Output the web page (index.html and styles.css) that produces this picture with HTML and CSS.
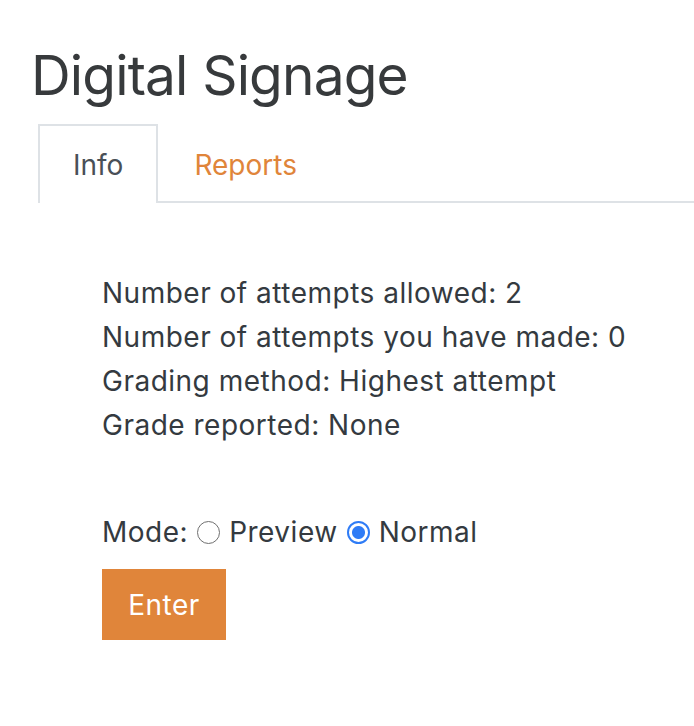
FILE: index.html
```html
<!DOCTYPE html>
<html lang="en">
<head>
<meta charset="utf-8">
<title>Digital Signage</title>
<link rel="stylesheet" href="styles.css">
</head>
<body>
<div class="page">
  <h1 class="title">Digital Signage</h1>
  <ul class="tabs">
    <li class="tab active">Info</li>
    <li class="tab"><a href="#">Reports</a></li>
  </ul>
  <div class="content">
    <div class="info">
      <p>Number of attempts allowed: 2</p>
      <p>Number of attempts you have made: 0</p>
      <p>Grading method: Highest attempt</p>
      <p>Grade reported: None</p>
    </div>
    <div class="mode">
      <span>Mode:</span>
      <label class="opt"><span class="radio"></span>Preview</label>
      <label class="opt"><span class="radio checked"></span>Normal</label>
    </div>
    <button class="enter">Enter</button>
  </div>
</div>
</body>
</html>
```
FILE: styles.css
```css
html, body {
  margin: 0;
  padding: 0;
  background: #fff;
}
body {
  font-family: Inter, "Noto Sans", sans-serif;
  color: #343a40;
}
.page {
  padding: 40px 0 0 33px;
}
.title {
  margin: 0 0 0 -2px;
  font-size: 55px;
  font-weight: 400;
  line-height: 70px;
  color: #373a3c;
  letter-spacing: -0.85px;
}
.tabs {
  list-style: none;
  margin: 14px 0 0 5px;
  padding: 0;
  display: flex;
  border-bottom: 2px solid #dee2e6;
}
.tab {
  height: 77px;
  padding: 0 34px;
  display: flex;
  align-items: center;
  font-size: 28px;
  letter-spacing: 0;
  color: #495057;
  border: 2px solid transparent;
  border-bottom: none;
  margin-bottom: -2px;
}
.tab.active {
  border-color: #dee2e6;
  background: #fff;
  height: 79px;
  box-sizing: border-box;
  padding: 0 33px;
}
.tab a {
  color: #e0853a;
  text-decoration: none;
}
.content {
  padding: 68px 0 0 69px;
  font-size: 28px;
  letter-spacing: 0.5px;
}
.info p {
  margin: 0;
  line-height: 44px;
}
.mode {
  margin-top: 63px;
  display: flex;
  align-items: center;
  line-height: 44px;
}
.opt {
  display: flex;
  align-items: center;
}
.radio {
  width: 23px;
  height: 23px;
  border: 1.5px solid #6f6f6f;
  border-radius: 50%;
  margin: 0 9px 0 9px;
  box-sizing: border-box;
}
.radio.checked {
  border: 2px solid #2f7cf6;
  background: radial-gradient(circle, #2f7cf6 0 6px, #fff 7px);
}
.enter {
  margin-top: 15px;
  width: 124px;
  height: 71px;
  border: none;
  background: #e0853a;
  color: #fff;
  font-family: inherit;
  font-size: 28px;
  letter-spacing: 0.5px;
  padding: 0;
}
```
